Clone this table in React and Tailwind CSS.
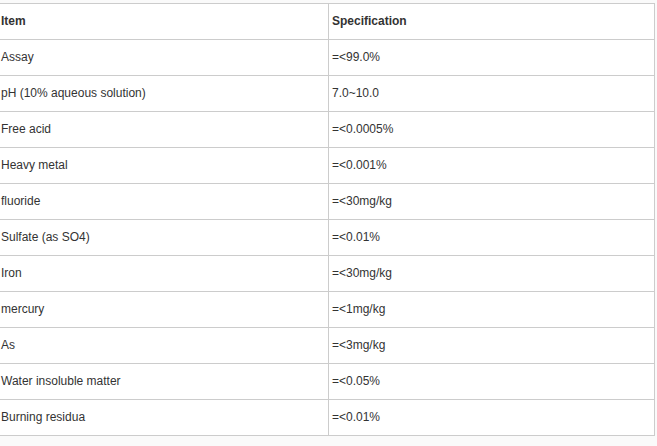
import React from 'react'

const rows = [
  ['Assay', '=<99.0%'],
  ['pH (10% aqueous solution)', '7.0~10.0'],
  ['Free acid', '=<0.0005%'],
  ['Heavy metal', '=<0.001%'],
  ['fluoride', '=<30mg/kg'],
  ['Sulfate (as SO4)', '=<0.01%'],
  ['Iron', '=<30mg/kg'],
  ['mercury', '=<1mg/kg'],
  ['As', '=<3mg/kg'],
  ['Water insoluble matter', '=<0.05%'],
  ['Burning residua', '=<0.01%'],
]

const App = () => {
  return (
    <div className="min-h-[446px] bg-[#fafafa] pt-[3px] text-[12px] text-[#333] font-['Liberation_Sans',Arial,sans-serif]">
      <div className="w-[655px] bg-white border-t border-r border-[#cccccc]">
        <div className="flex h-[36px] border-b border-[#cccccc] font-bold">
          <div className="w-[328px] flex items-center pl-[1px] pb-[2px]">Item</div>
          <div className="flex-1 flex items-center pl-[3px] pb-[2px] border-l border-[#cccccc]">Specification</div>
        </div>
        {rows.map(([item, spec]) => (
          <div key={item} className="flex h-[36px] border-b border-[#cccccc]">
            <div className="w-[328px] flex items-center pl-[1px] pb-[2px]">{item}</div>
            <div className="flex-1 flex items-center pl-[3px] pb-[2px] border-l border-[#cccccc]">{spec}</div>
          </div>
        ))}
      </div>
    </div>
  )
}

export default App
